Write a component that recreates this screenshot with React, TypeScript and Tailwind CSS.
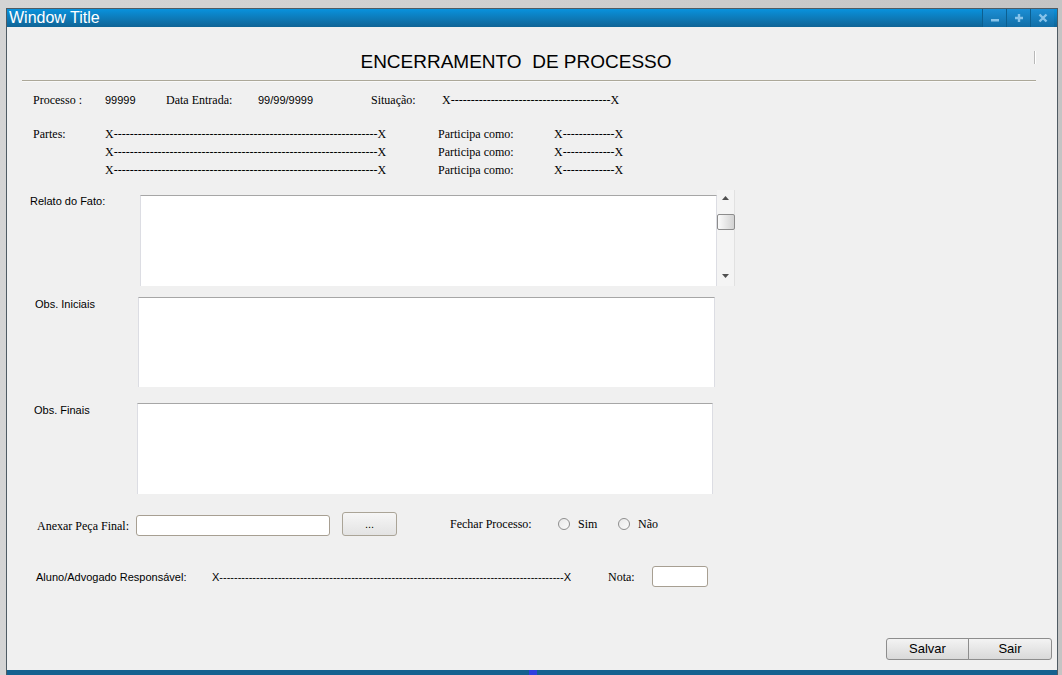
import React from "react";

const serif = "font-['Liberation_Serif',serif] text-[12px] text-black";
const sans = "font-['Liberation_Sans',Arial,sans-serif] text-[11px] text-black";

const dashes = (n: number) => "X" + "-".repeat(n) + "X";

function TitleButton({ children }: { children: React.ReactNode }) {
  return (
    <div className="flex h-full w-[24px] items-center justify-center border-l border-[#0c5f90] bg-gradient-to-b from-[#1b8fd6] to-[#126ea6]">
      {children}
    </div>
  );
}

function TextArea({ w, h }: { w: number; h: number }) {
  return (
    <div
      className="border-t border-l border-r border-t-[#a6a6a6] border-l-[#dcdde3] border-r-[#dcdde3] bg-white"
      style={{ width: w, height: h }}
    />
  );
}

function Radio({ label }: { label: string }) {
  return (
    <div className="flex items-center">
      <span className="h-[12px] w-[12px] rounded-full border border-[#8e8e8e] bg-gradient-to-br from-[#e8e8e8] to-[#fbfbfb]" />
      <span className={`${serif} ml-[8px]`}>{label}</span>
    </div>
  );
}

export default function App() {
  return (
    <div className="h-[675px] w-[1062px] overflow-hidden bg-gradient-to-r from-[#d4d4d4] via-[#cfcfcf] to-[#c4c4c4] pl-[6px] pr-[4px] pt-[8px]">
      <div className="flex h-[667px] flex-col border-l border-r border-t border-[#4f5b63] bg-[#f0f0f0]">
        {/* title bar */}
        <div className="flex h-[18px] items-center justify-between bg-gradient-to-b from-[#0892dd] to-[#0f6496] pr-[3px]">
          <span className="pl-[2px] font-['Liberation_Sans',Arial,sans-serif] text-[16px] leading-[18px] text-white">
            Window Title
          </span>
          <div className="flex h-full">
            <TitleButton>
              <svg width="10" height="10" viewBox="0 0 10 10">
                <rect x="1" y="6" width="8" height="2.5" fill="#86c3ea" />
              </svg>
            </TitleButton>
            <TitleButton>
              <svg width="10" height="10" viewBox="0 0 10 10">
                <path d="M3.8 1h2.4v2.8H9v2.4H6.2V9H3.8V6.2H1V3.8h2.8z" fill="#86c3ea" />
              </svg>
            </TitleButton>
            <TitleButton>
              <svg width="10" height="10" viewBox="0 0 10 10">
                <path d="M1.5 1.5l7 7M8.5 1.5l-7 7" stroke="#86c3ea" strokeWidth="2.4" />
              </svg>
            </TitleButton>
          </div>
        </div>

        {/* content */}
        <div className="flex flex-1 flex-col">
          <div className="relative h-[53px] pr-[32px] pt-[23px] text-center">
            <span className="whitespace-pre font-['Liberation_Sans',Arial,sans-serif] text-[19px] leading-[22px] text-black">
              ENCERRAMENTO  DE PROCESSO
            </span>
            <div className="absolute right-[21px] top-[24px] h-[13px] w-[2px] border-l border-[#b8b8b8] bg-white" />
          </div>
          <div className="ml-[15px] mr-[21px] h-[2px] border-t border-[#aca899] bg-white/60" />

          {/* row 1 */}
          <div className="mt-[10px] flex h-[16px] items-center pl-[26px]">
            <span className={`${serif} w-[72px]`}>Processo :</span>
            <span className={`${sans} w-[61px]`}>99999</span>
            <span className={`${serif} w-[92px]`}>Data Entrada:</span>
            <span className={`${sans} w-[113px]`}>99/99/9999</span>
            <span className={`${serif} w-[71px]`}>Situação:</span>
            <span className={serif}>{dashes(40)}</span>
          </div>

          {/* partes */}
          <div className="mt-[17px] flex flex-col pl-[26px]">
            {[0, 1, 2].map((i) => (
              <div key={i} className="flex h-[18px] items-center">
                <span className={`${serif} w-[72px]`}>{i === 0 ? "Partes:" : ""}</span>
                <span className={`${serif} w-[333px]`}>{dashes(66)}</span>
                <span className={`${serif} w-[116px]`}>Participa como:</span>
                <span className={serif}>{dashes(13)}</span>
              </div>
            ))}
          </div>

          {/* relato */}
          <div className="mt-[11px] flex items-start pl-[23px]">
            <span className={`${sans} mt-[3px] w-[110px]`}>Relato do Fato:</span>
            <div className="mt-[5px]">
              <TextArea w={577} h={91} />
            </div>
            <div className="flex h-[96px] w-[18px] flex-col items-center border-r border-[#e1e1e1] bg-[#f4f4f4]">
              <svg className="mt-[6px]" width="7" height="4" viewBox="0 0 7 4">
                <path d="M3.5 0L7 4H0z" fill="#505050" />
              </svg>
              <div className="mt-[14px] h-[16px] w-[18px] rounded-[2px] border border-[#8c8c8c] bg-gradient-to-r from-[#fbfbfb] to-[#d2d2d2]" />
              <div className="flex-1" />
              <svg className="mb-[8px]" width="7" height="4" viewBox="0 0 7 4">
                <path d="M0 0h7L3.5 4z" fill="#505050" />
              </svg>
            </div>
          </div>

          {/* obs iniciais */}
          <div className="mt-[11px] flex items-start pl-[28px]">
            <span className={`${sans} w-[103px] leading-[14px]`}>Obs. Iniciais</span>
            <TextArea w={577} h={90} />
          </div>

          {/* obs finais */}
          <div className="mt-[16px] flex items-start pl-[27px]">
            <span className={`${sans} w-[103px] leading-[14px]`}>Obs. Finais</span>
            <TextArea w={576} h={91} />
          </div>

          {/* anexar */}
          <div className="mt-[18px] flex h-[24px] items-center pl-[30px]">
            <span className={`${serif} mt-[3px] w-[99px]`}>Anexar Peça Final:</span>
            <div className="mt-[3px] h-[21px] w-[194px] rounded-[3px] border border-[#a79f92] bg-white" />
            <button className="ml-[12px] flex h-[24px] w-[55px] items-center justify-center rounded-[3px] border border-[#aaa497] bg-gradient-to-b from-[#f6f6f6] to-[#e3e3e3] font-['Liberation_Sans',Arial,sans-serif] text-[11px] text-black">
              ...
            </button>
            <span className={`${serif} ml-[53px] w-[108px]`}>Fechar Processo:</span>
            <div className="w-[60px]">
              <Radio label="Sim" />
            </div>
            <Radio label="Não" />
          </div>

          {/* aluno */}
          <div className="mt-[30px] flex h-[21px] items-center pl-[29px]">
            <span className={`${sans} mt-[2px] w-[176px]`}>Aluno/Advogado Responsável:</span>
            <span className={`${sans} mt-[2px] w-[396px]`}>{dashes(94)}</span>
            <span className={`${serif} w-[44px]`}>Nota:</span>
            <div className="h-[21px] w-[56px] rounded-[3px] border border-[#a79f92] bg-white" />
          </div>

          {/* buttons */}
          <div className="mt-[51px] flex justify-end pr-[5px]">
            <button className="h-[22px] w-[83px] rounded-l-[3px] border border-[#8d8d8d] bg-gradient-to-b from-[#f3f3f3] to-[#d9d9d9] font-['Liberation_Sans',Arial,sans-serif] text-[13px] text-black">
              Salvar
            </button>
            <button className="-ml-px h-[22px] w-[84px] rounded-r-[3px] border border-[#8d8d8d] bg-gradient-to-b from-[#f3f3f3] to-[#d9d9d9] font-['Liberation_Sans',Arial,sans-serif] text-[13px] text-black">
              Sair
            </button>
          </div>
        </div>

        {/* bottom bar */}
        <div className="flex h-[5px] bg-[#14618f]">
          <div className="ml-[522px] h-[5px] w-[8px] bg-[#2f3fdf]" />
        </div>
      </div>
    </div>
  );
}
